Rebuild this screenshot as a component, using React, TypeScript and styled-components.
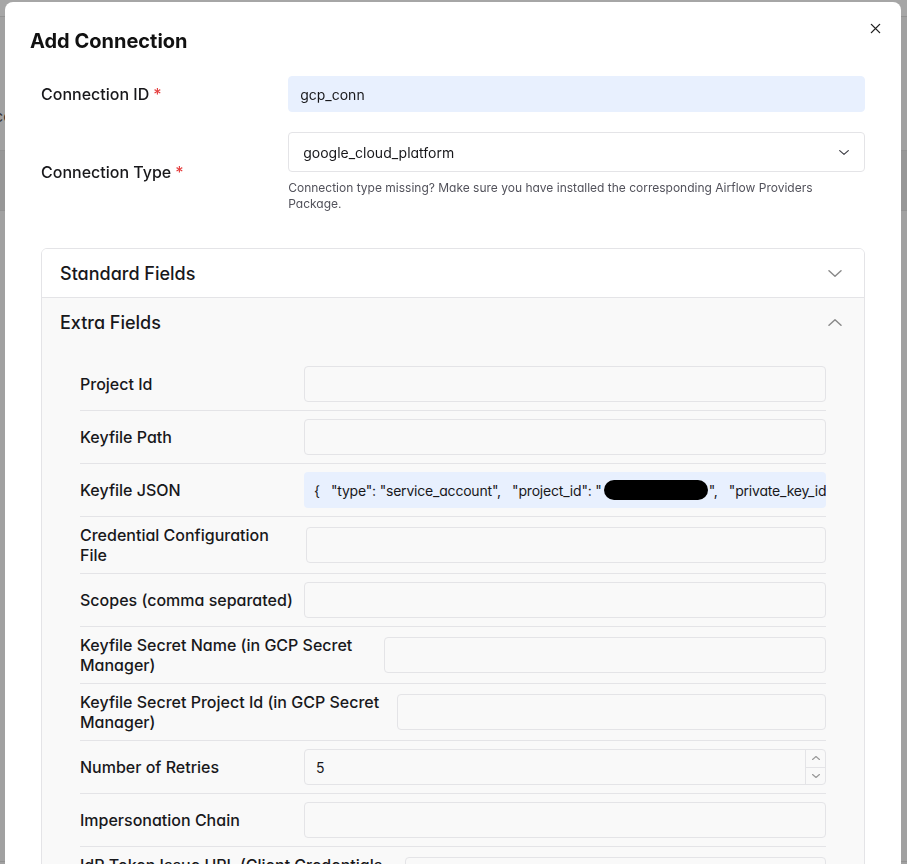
import React from "react";
import styled, { createGlobalStyle } from "styled-components";

const Global = createGlobalStyle`
  html, body { margin: 0; padding: 0; }
  body {
    font-family: Inter, "Noto Sans", "Liberation Sans", sans-serif;
    font-feature-settings: "cv11" 1;
    background: #a1a1a1;
    height: 864px;
    overflow: hidden;
  }
  * { box-sizing: border-box; }
`;

/* ---------- dimmed page behind the dialog ---------- */
const Backdrop = styled.div`
  display: flex;
  flex-direction: column;
  height: 864px;
  background: #a1a1a1;
`;

const Strip = styled.div<{ $h: number; $bg: string }>`
  flex: 0 0 ${(p) => p.$h}px;
  background: ${(p) => p.$bg};
  border-bottom: 1px solid #929292;
  display: flex;
  align-items: flex-start;
  overflow: hidden;
`;

const GhostText = styled.span`
  margin: 89px 0 0 -6px;
  font-size: 16px;
  line-height: 20px;
  color: #333;
`;

/* ---------- dialog ---------- */
const Dialog = styled.div`
  position: fixed;
  top: 2px;
  left: 5px;
  width: 896px;
  height: 1200px;
  background: #ffffff;
  border-radius: 8px 8px 0 0;
  overflow: hidden;
`;

const Header = styled.div`
  padding: 24px 24px 0 25px;
`;

const Title = styled.h2`
  margin: 0;
  font-size: 20px;
  line-height: 30px;
  font-weight: 700;
  color: #111111;
`;

const CloseButton = styled.button`
  position: absolute;
  top: 14px;
  right: 14px;
  width: 24px;
  height: 24px;
  border: none;
  background: transparent;
  padding: 0;
  display: flex;
  align-items: center;
  justify-content: center;
  cursor: pointer;
`;

const Body = styled.div`
  padding: 20px 36px 0 36px;
  display: flex;
  flex-direction: column;
`;

const TopRow = styled.div<{ $mt?: number }>`
  display: flex;
  align-items: center;
  margin-top: ${(p) => p.$mt ?? 0}px;
`;

const TopLabel = styled.label`
  flex: 0 0 30%;
  font-size: 16px;
  line-height: 20px;
  font-weight: 460;
  color: #18181b;
`;

const Required = styled.span`
  color: #e53e3e;
  margin-left: 4px;
`;

const Control = styled.div`
  flex: 1 1 auto;
  min-width: 0;
  display: flex;
  flex-direction: column;
`;

const TextInput = styled.input<{ $filled?: boolean; $h?: number }>`
  width: 100%;
  height: ${(p) => p.$h ?? 36}px;
  border: 1px solid ${(p) => (p.$filled ? "#e8f0fe" : "#e4e4e7")};
  border-radius: 4px;
  background: ${(p) => (p.$filled ? "#e8f0fe" : "transparent")};
  padding: 0 11px;
  font-family: inherit;
  font-feature-settings: "cv11" 1;
  font-size: 14px;
  color: #18181b;
  outline: none;
`;

const SelectBox = styled.div`
  height: 40px;
  border: 1px solid #e4e4e7;
  border-radius: 4px;
  background: #fff;
  padding: 0 15px 0 14px;
  display: flex;
  align-items: center;
  justify-content: space-between;
  font-size: 14px;
  color: #18181b;
`;

const Helper = styled.p`
  margin: 8px 0 0 0;
  font-size: 12px;
  line-height: 16px;
  color: #52525b;
`;

/* ---------- accordion ---------- */
const Accordion = styled.div`
  margin-top: 36px;
  border: 1px solid #e4e4e7;
  border-radius: 6px;
  overflow: hidden;
`;

const Section = styled.div<{ $open?: boolean }>`
  background: ${(p) => (p.$open ? "#f9f9f9" : "#ffffff")};
  & + & {
    border-top: 1px solid #e4e4e7;
  }
`;

const SectionHeader = styled.div`
  height: 48px;
  padding: 0 22px 0 18px;
  display: flex;
  align-items: center;
  justify-content: space-between;
  font-size: 18px;
  font-weight: 460;
  color: #18181b;
`;

const SectionContent = styled.div`
  padding: 12px 38px 0 38px;
  display: flex;
  flex-direction: column;
`;

const FieldRow = styled.div`
  display: flex;
  align-items: center;
  padding: 8px 0;
  border-bottom: 1px solid #e4e4e7;
`;

const FieldLabel = styled.label<{ $w: number }>`
  flex: 0 0 ${(p) => p.$w}px;
  font-size: 16px;
  line-height: 20px;
  font-weight: 460;
  color: #18181b;
  white-space: nowrap;
`;

const JsonBox = styled.div`
  flex: 1 1 auto;
  min-width: 0;
  height: 36px;
  border-radius: 4px;
  background: #e8f0fe;
  padding: 0 10px;
  display: flex;
  align-items: center;
  font-size: 14px;
  letter-spacing: -0.2px;
  color: #18181b;
  white-space: pre;
  overflow: hidden;
`;

const Redaction = styled.span`
  display: inline-block;
  flex: 0 0 104px;
  height: 20px;
  margin: 0 1px 0 2px;
  border-radius: 10px;
  background: #000;
`;

const NumberBox = styled.div`
  flex: 1 1 auto;
  min-width: 0;
  height: 36px;
  border: 1px solid #e4e4e7;
  border-radius: 4px;
  display: flex;
  overflow: hidden;
`;

const NumberInput = styled.input`
  flex: 1 1 auto;
  min-width: 0;
  border: none;
  background: transparent;
  padding: 0 11px;
  font-family: inherit;
  font-size: 14px;
  color: #18181b;
  outline: none;
`;

const Stepper = styled.div`
  flex: 0 0 20px;
  display: flex;
  flex-direction: column;
  border-left: 1px solid #e4e4e7;
`;

const StepButton = styled.div`
  flex: 1 1 0;
  display: flex;
  align-items: center;
  justify-content: center;
  & + & {
    border-top: 1px solid #e4e4e7;
  }
`;

const Chevron = ({ up, size = 14, color = "#8a8a8a", w = 1.5 }: { up?: boolean; size?: number; color?: string; w?: number }) => (
  <svg width={size} height={size / 2} viewBox="0 0 14 7" fill="none">
    <path
      d={up ? "M1 6.2 L7 0.8 L13 6.2" : "M1 0.8 L7 6.2 L13 0.8"}
      stroke={color}
      strokeWidth={w}
      strokeLinecap="round"
      strokeLinejoin="round"
      vectorEffect="non-scaling-stroke"
    />
  </svg>
);

type Field = { label: React.ReactNode; w: number; kind?: "text" | "json" | "number"; value?: string };

const fields: Field[] = [
  { label: "Project Id", w: 224 },
  { label: "Keyfile Path", w: 224 },
  { label: "Keyfile JSON", w: 224, kind: "json" },
  { label: <>Credential Configuration<br />File</>, w: 226 },
  { label: "Scopes (comma separated)", w: 224 },
  { label: <>Keyfile Secret Name (in GCP Secret<br />Manager)</>, w: 304 },
  { label: <>Keyfile Secret Project Id (in GCP Secret<br />Manager)</>, w: 317 },
  { label: "Number of Retries", w: 224, kind: "number", value: "5" },
  { label: "Impersonation Chain", w: 224 },
  { label: <>IdP Token Issue URL (Client Credentials<br />Grant Flow)</>, w: 325 },
];

export default function App() {
  return (
    <>
      <Global />
      <Backdrop>
        <Strip $h={17} $bg="#a6a6a6" />
        <Strip $h={134} $bg="#a1a1a1">
          <GhostText>co</GhostText>
        </Strip>
        <Strip $h={60} $bg="#979797" />
        <Strip $h={651} $bg="#a1a1a1" />
      </Backdrop>

      <Dialog>
        <Header>
          <Title>Add Connection</Title>
        </Header>
        <CloseButton aria-label="Close">
          <svg width="11" height="11" viewBox="0 0 12 12" fill="none">
            <path d="M1.5 1.5 L10.5 10.5 M10.5 1.5 L1.5 10.5" stroke="#222" strokeWidth="1.5" strokeLinecap="round" />
          </svg>
        </CloseButton>

        <Body>
          <TopRow>
            <TopLabel>
              Connection ID<Required>*</Required>
            </TopLabel>
            <Control>
              <TextInput $filled readOnly value="gcp_conn" />
            </Control>
          </TopRow>

          <TopRow $mt={20}>
            <TopLabel>
              Connection Type<Required>*</Required>
            </TopLabel>
            <Control>
              <SelectBox>
                <span>google_cloud_platform</span>
                <Chevron size={10} color="#3f3f46" w={1.2} />
              </SelectBox>
              <Helper>
                Connection type missing? Make sure you have installed the corresponding Airflow Providers
                <br />
                Package.
              </Helper>
            </Control>
          </TopRow>

          <Accordion>
            <Section>
              <SectionHeader>
                Standard Fields
                <Chevron />
              </SectionHeader>
            </Section>
            <Section $open>
              <SectionHeader>
                Extra Fields
                <Chevron up />
              </SectionHeader>
              <SectionContent>
                {fields.map((f, i) => (
                  <FieldRow key={i}>
                    <FieldLabel $w={f.w}>{f.label}</FieldLabel>
                    {f.kind === "json" ? (
                      <JsonBox>
                        {'{   "type": "service_account",   "project_id": "'}
                        <Redaction />
                        {'",   "private_key_id": "3f9a2c"'}
                      </JsonBox>
                    ) : f.kind === "number" ? (
                      <NumberBox>
                        <NumberInput readOnly value={f.value} />
                        <Stepper>
                          <StepButton>
                            <Chevron up size={8} color="#9a9a9a" w={1.2} />
                          </StepButton>
                          <StepButton>
                            <Chevron size={8} color="#9a9a9a" w={1.2} />
                          </StepButton>
                        </Stepper>
                      </NumberBox>
                    ) : (
                      <TextInput readOnly value="" />
                    )}
                  </FieldRow>
                ))}
              </SectionContent>
            </Section>
          </Accordion>
        </Body>
      </Dialog>
    </>
  );
}
